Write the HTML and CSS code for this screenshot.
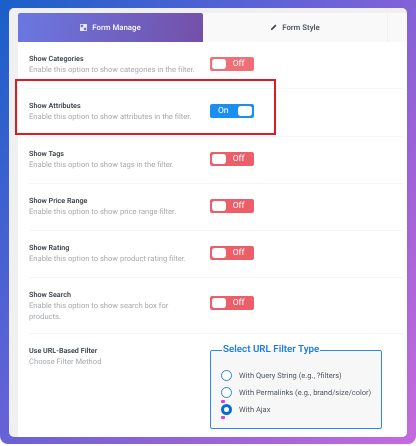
FILE: index.html
```html
<!DOCTYPE html>
<html lang="en">
<head>
<meta charset="utf-8">
<title>Form Manage</title>
<link rel="stylesheet" href="styles.css">
</head>
<body>
<div class="frame">
  <div class="card">
    <div class="tabs">
      <div class="tab tab-active">
        <svg class="tab-icon" viewBox="0 0 10 10"><path fill="#e8e8f4" d="M0 0h10v10H0z"/><path fill="#7a6fc4" d="M1 1h3.500v3.500H1zM5.500 5.500H9V9H5.500z"/></svg>
        <span>Form Manage</span>
      </div>
      <div class="tab">
        <svg class="tab-icon" viewBox="0 0 10 10"><path fill="#3c434a" d="M7.600.800l1.600 1.600-5.700 5.700-2.400.800.800-2.400z"/></svg>
        <span>Form Style</span>
      </div>
      <div class="tab-end"></div>
    </div>
    <div class="panel">
      <div class="row">
        <div class="info"><div class="title">Show Categories</div><div class="desc">Enable this option to show categories in the filter.</div></div>
        <div class="toggle off light"><span class="knob"></span><span class="label">Off</span></div>
      </div>
      <div class="row">
        <div class="info"><div class="title">Show Attributes</div><div class="desc">Enable this option to show attributes in the filter.</div></div>
        <div class="toggle on"><span class="label">On</span><span class="knob"></span></div>
      </div>
      <div class="row">
        <div class="info"><div class="title">Show Tags</div><div class="desc">Enable this option to show tags in the filter.</div></div>
        <div class="toggle off"><span class="knob"></span><span class="label">Off</span></div>
      </div>
      <div class="row">
        <div class="info"><div class="title">Show Price Range</div><div class="desc">Enable this option to show price range filter.</div></div>
        <div class="toggle off"><span class="knob"></span><span class="label">Off</span></div>
      </div>
      <div class="row">
        <div class="info"><div class="title">Show Rating</div><div class="desc">Enable this option to show product rating filter.</div></div>
        <div class="toggle off"><span class="knob"></span><span class="label">Off</span></div>
      </div>
      <div class="row row-tall">
        <div class="info"><div class="title">Show Search</div><div class="desc desc-narrow">Enable this option to show search box for products.</div></div>
        <div class="toggle off"><span class="knob"></span><span class="label">Off</span></div>
      </div>
      <div class="row row-last">
        <div class="info"><div class="title">Use URL-Based Filter</div><div class="desc">Choose Filter Method</div></div>
        <fieldset class="filter-box">
          <legend>Select URL Filter Type</legend>
          <div class="option"><span class="radio"></span><span>With Query String (e.g., ?filters)</span></div>
          <div class="option"><span class="radio"></span><span>With Permalinks (e.g., brand/size/color)</span></div>
          <div class="option"><span class="radio radio-on"><i class="dot dot-top"></i><i class="dot dot-bottom"></i></span><span>With Ajax</span></div>
        </fieldset>
      </div>
    </div>
    <div class="highlight"></div>
  </div>
</div>
</body>
</html>
```
FILE: styles.css
```css
* { box-sizing: border-box; }
html, body { margin: 0; padding: 0; background: #fff; }
body {
  width: 416px;
  height: 446px;
  overflow: hidden;
  font-family: Roboto, "Noto Sans", sans-serif;
  text-rendering: geometricPrecision;
}
.frame {
  height: 444px;
  padding: 8px 9px 7px 9px;
  border-radius: 0 0 8px 8px;
  background: linear-gradient(125deg, #1a5fc8 0%, #5a62d6 35%, #9a62d8 70%, #c56ade 100%);
  filter: blur(0.35px);
}
.card {
  position: relative;
  height: 100%;
  padding: 5px 0 0 9px;
  background: #f0f0f1;
  border-radius: 5px;
  overflow: hidden;
}
.tabs {
  display: flex;
  height: 29px;
  background: #f9f9fa;
}
.tab {
  display: flex;
  align-items: center;
  justify-content: center;
  gap: 5px;
  width: 185px;
  font-size: 7.800px;
  font-weight: 600;
  color: #50575e;
}
.tab-active {
  color: #f2f0fa;
  border-radius: 2px 2px 0 0;
  background: linear-gradient(100deg, #6a78e2 0%, #7450a8 100%);
}
.tab + .tab { border-right: 1px solid #f0f0f1; }
.tab-end { flex: 1; }
.tab-icon { width: 7px; height: 7px; }
.panel { height: 100%; background: #fff; padding-left: 11px; padding-right: 4px; }
.row {
  display: flex;
  align-items: flex-start;
  height: 47.300px;
  padding-top: 11px;
  border-bottom: 1px solid #f6f6f7;
}
.row-tall { height: 56px; }
.row-last { border-bottom: 0; height: 100px; padding-top: 11px; }
.info { width: 181px; flex: none; padding-right: 6px; }
.desc-narrow { padding-right: 8px; }
.title {
  font-size: 7.200px;
  line-height: 11px;
  font-weight: 600;
  color: #3c434a;
}
.desc {
  font-size: 7.600px;
  line-height: 11px;
  color: #a7aaad;
}
.toggle {
  display: flex;
  align-items: center;
  justify-content: space-between;
  width: 43.500px;
  height: 14px;
  margin-top: 4px;
  padding: 2px;
  border-radius: 2px;
  font-size: 8.500px;
  color: #fff;
}
.row-tall .toggle { margin-top: 7px; }
.off { background: #ec5f69; }
.off.light { background: #ef6f76; }
.on { background: #1b8fee; }
.knob { width: 14px; height: 10px; border-radius: 3px; background: #fff; }
.off .label { margin-right: 7px; }
.on .label { margin-left: 6px; }
.filter-box {
  width: 172px;
  min-width: 0;
  height: 85px;
  margin: -1px 0 0;
  padding: 10px 8px 0 10px;
  background: #f7f7f8;
  border: 1px solid #2c8ae6;
  border-radius: 2px;
}
.filter-box legend {
  padding: 0 1px;
  margin-left: 1px;
  font-size: 9.800px;
  line-height: 12px;
  font-weight: 600;
  color: #1f7fe0;
}
.option {
  display: flex;
  align-items: center;
  gap: 7px;
  height: 17.200px;
  font-size: 7.500px;
  color: #50575e;
  white-space: nowrap;
}
.radio {
  position: relative;
  flex: none;
  width: 11px;
  height: 11px;
  background: #fff;
  border: 1.200px solid #2a7fd0;
  border-radius: 50%;
}
.radio-on { background: #fff; border: 3.500px solid #0a6bd6; }
.dot {
  position: absolute;
  left: -3.500px;
  width: 4px;
  height: 3px;
  background: #dc3fdc;
  border-radius: 1px;
}
.dot-top { top: -6.500px; }
.dot-bottom { bottom: -7.500px; }
.highlight {
  position: absolute;
  left: 6px;
  top: 71px;
  width: 261px;
  height: 56px;
  border: 2px solid #dc1c24;
}
```
